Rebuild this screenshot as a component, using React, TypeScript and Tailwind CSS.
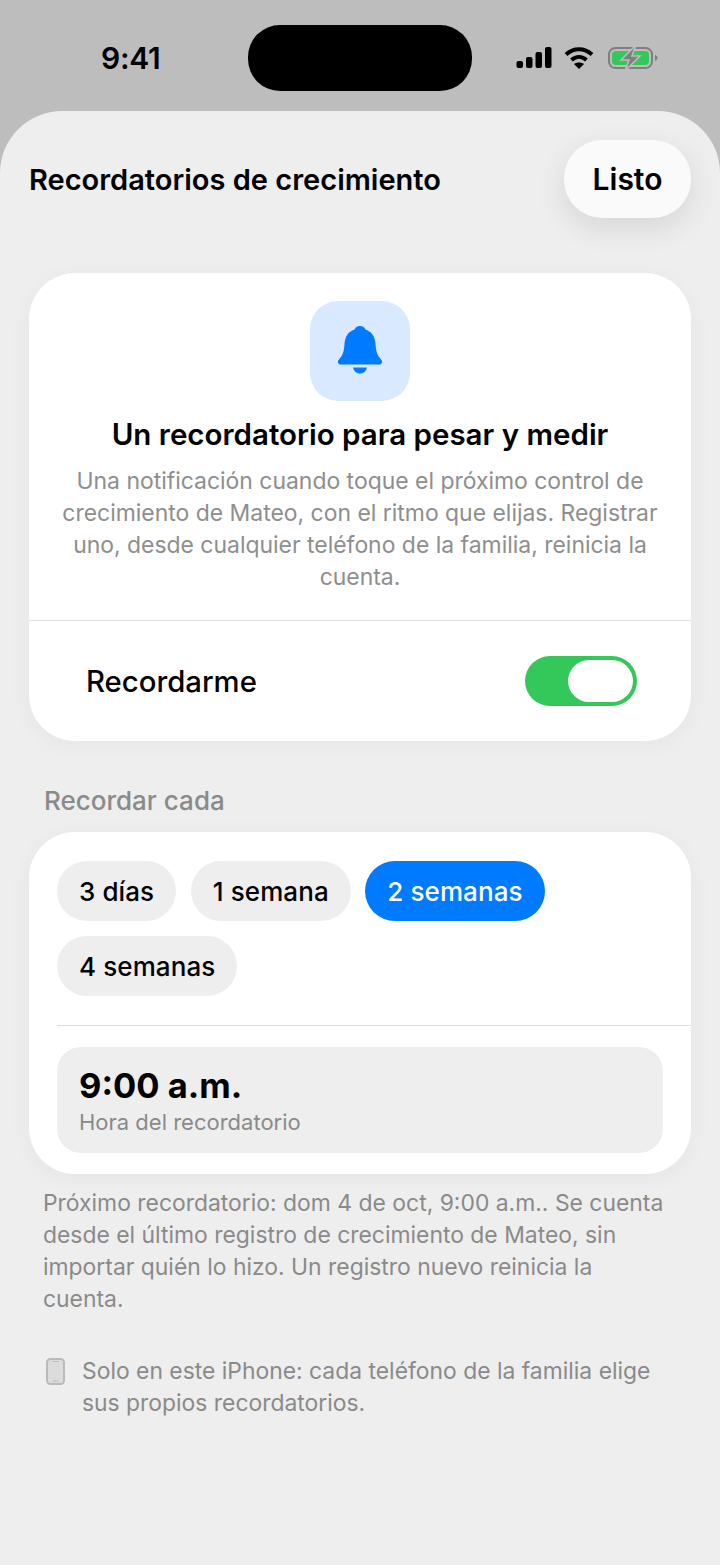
const fontStack = { fontFamily: "Inter, 'Noto Sans', sans-serif" };

const StatusBar = () => (
  <div className="flex h-[111px] items-start">
    <div className="mt-[40px] w-[248px] pl-[101px] text-[30px] leading-[36px] font-semibold tracking-[-0.3px] text-black">9:41</div>
    <div className="mt-[25px] h-[66px] w-[224px] rounded-[32px] bg-black" />
    <div className="mt-[45px] ml-[44px] flex items-center gap-[12px]">
      {/* signal */}
      <svg width="36" height="24" viewBox="0 0 36 24" fill="#000">
        <rect x="0.5" y="15" width="6.5" height="7" rx="2" />
        <rect x="10" y="11" width="6.5" height="11" rx="2" />
        <rect x="19.5" y="6" width="6.5" height="16" rx="2" />
        <rect x="29" y="1" width="6.5" height="21" rx="2" />
      </svg>
      {/* wifi */}
      <svg width="30" height="24" viewBox="0 0 30 24" fill="none" stroke="#000" strokeWidth="4">
        <path d="M2 8.5C9.5 1.5 20.5 1.5 28 8.5" />
        <path d="M7.5 14C12 10 18 10 22.5 14" />
        <path d="M15 23l-5-5c3-2 7-2 10 0z" fill="#000" stroke="none" />
      </svg>
      {/* battery charging */}
      <svg width="50" height="26" viewBox="0 0 50 26" className="ml-[2px]">
        <rect x="1" y="3" width="43" height="20" rx="6.500" fill="none" stroke="#7f7f7f" strokeWidth="2" />
        <rect x="4" y="6" width="37" height="14" rx="4" fill="#34c759" />
        <path d="M47 10c1.600.5 2.500 1.600 2.500 3s-.9 2.500-2.500 3z" fill="#7f7f7f" />
        <path d="M28 0L13 15h8L17 26l15-15h-8z" fill="#7f7f7f" stroke="#bdbdbd" strokeWidth="1.500" />
      </svg>
    </div>
  </div>
);

const Chip = ({ label, active }: { label: string; active?: boolean }) => (
  <div
    className={`flex h-[60px] items-center rounded-full px-[22px] text-[26px] font-medium tracking-[0.1px] ${
      active ? "bg-[#007aff] text-white" : "bg-[#eeeeee] text-black"
    }`}
  >
    {label}
  </div>
);

export default function App() {
  return (
    <div className="h-[1565px] w-[720px] overflow-hidden bg-[#bdbdbd]" style={fontStack}>
      <StatusBar />

      <div className="h-[1454px] rounded-t-[62px] bg-[#eeeeee] px-[29px]">
        {/* Header */}
        <div className="flex items-center justify-between pt-[29px]">
          <div className="pt-[2px] text-[29px] leading-[76px] font-semibold text-black">
            Recordatorios de crecimiento
          </div>
          <div className="flex h-[78px] w-[127px] items-center justify-center rounded-[38px] bg-[#fafafa] pt-[1px] text-[30px] font-semibold text-black shadow-[0_10px_30px_rgba(0,0,0,0.1)]">
            Listo
          </div>
        </div>

        {/* Intro card */}
        <div className="mt-[55px] h-[468px] rounded-[46px] bg-white shadow-[0_4px_24px_rgba(0,0,0,0.04)]">
          <div className="flex flex-col items-center pt-[28px]">
            <div className="flex h-[100px] w-[100px] items-center justify-center rounded-[28px] bg-[#d9e9ff]">
              <svg width="46" height="50" viewBox="0 0 46 50" fill="#007aff">
                <path d="M23 0c3 0 4.500 1.500 5.500 3.500C35 5.500 38 11 38.500 18c.5 7 1.500 11 5.500 15.500 2 2.200 1 5-2 5H4c-3 0-4-2.800-2-5C6 29 7 25 7.500 18 8 11 11 5.500 17.500 3.500 18.500 1.500 20 0 23 0z" />
                <path d="M16 41.500h14c-.8 3.800-3.600 6-7 6s-6.200-2.200-7-6z" />
              </svg>
            </div>
            <div className="mt-[14px] text-[29.5px] leading-[38px] font-semibold text-black">
              Un recordatorio para pesar y medir
            </div>
            <p className="mt-[12px] w-[610px] text-center text-[22.93px] leading-[32px] text-[#8e8e8e]">
              Una notificación cuando toque el próximo control de crecimiento de Mateo, con el ritmo que elijas.
              Registrar uno, desde cualquier teléfono de la familia, reinicia la cuenta.
            </p>
          </div>
          <div className="mt-[27px] border-t border-[#dedede]" />
          <div className="flex h-[120px] items-center justify-between pr-[54px] pl-[57px]">
            <span className="pt-[2px] text-[29.3px] font-medium text-black">Recordarme</span>
            <div className="flex h-[50px] w-[112px] items-center justify-end rounded-full bg-[#34c759] pr-[4px]">
              <div className="h-[42px] w-[65px] rounded-full bg-white" />
            </div>
          </div>
        </div>

        {/* Frequency */}
        <div className="mt-[44px] pl-[15px] text-[26px] leading-[32px] font-medium text-[#8a8a8a]">Recordar cada</div>
        <div className="mt-[15px] h-[342px] rounded-[46px] bg-white pt-[29px] pl-[28px] shadow-[0_4px_24px_rgba(0,0,0,0.04)]">
          <div className="flex flex-wrap gap-x-[14.5px] gap-y-[15px] pr-[120px]">
            <Chip label="3 días" />
            <Chip label="1 semana" />
            <Chip label="2 semanas" active />
            <Chip label="4 semanas" />
          </div>
          <div className="mt-[29px] border-t border-[#dedede]" />
          <div className="mt-[21px] mr-[28px] flex h-[106px] flex-col justify-center rounded-[24px] bg-[#eeeeee] px-[22px]">
            <div className="text-[34.5px] leading-[44px] font-bold text-black">9:00 a.m.</div>
            <div className="text-[22px] leading-[28px] font-normal text-[#8a8a8a]">Hora del recordatorio</div>
          </div>
        </div>

        {/* Notes */}
        <p className="mt-[13px] pr-[20px] pl-[14px] text-[22.9px] leading-[32px] text-[#8a8a8a]">
          Próximo recordatorio: dom 4 de oct, 9:00 a.m.. Se cuenta desde el último registro de crecimiento de Mateo, sin
          importar quién lo hizo. Un registro nuevo reinicia la cuenta.
        </p>
        <div className="mt-[40px] flex items-start gap-[17px] pl-[17px]">
          <svg width="19" height="27" viewBox="0 0 19 27" className="mt-[3px] shrink-0">
            <rect x="1" y="1" width="17" height="25" rx="3.500" fill="#dcdcdc" stroke="#bababa" strokeWidth="2" />
            <rect x="6.500" y="3" width="6" height="1" fill="#bababa" />
            <rect x="6.500" y="22.500" width="6" height="1" fill="#bababa" />
          </svg>
          <p className="w-[590px] text-[22.88px] leading-[32px] text-[#8a8a8a]">
            Solo en este iPhone: cada teléfono de la familia elige sus propios recordatorios.
          </p>
        </div>
      </div>
    </div>
  );
}
